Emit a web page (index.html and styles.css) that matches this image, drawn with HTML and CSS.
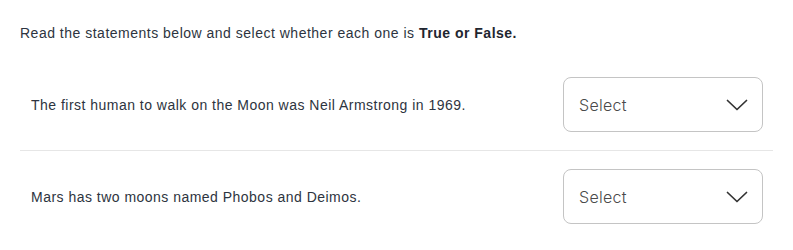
FILE: index.html
```html
<!DOCTYPE html>
<html lang="en">
<head>
<meta charset="utf-8">
<title>True or False</title>
<link rel="stylesheet" href="styles.css">
</head>
<body>
<div class="quiz">
  <p class="intro">Read the statements below and select whether each one is <strong>True or False.</strong></p>
  <div class="row">
    <span class="statement">The first human to walk on the Moon was Neil Armstrong in 1969.</span>
    <div class="select">
      <span class="select-label">Select</span>
      <svg class="chev" width="22" height="12" viewBox="0 0 22 12"><path d="M1.5 1.5 L11 10.5 L20.5 1.5" fill="none" stroke="#333" stroke-width="1.7" stroke-linecap="round" stroke-linejoin="round"/></svg>
    </div>
  </div>
  <div class="row">
    <span class="statement">Mars has two moons named Phobos and Deimos.</span>
    <div class="select">
      <span class="select-label">Select</span>
      <svg class="chev" width="22" height="12" viewBox="0 0 22 12"><path d="M1.5 1.5 L11 10.5 L20.5 1.5" fill="none" stroke="#333" stroke-width="1.7" stroke-linecap="round" stroke-linejoin="round"/></svg>
    </div>
  </div>
</div>
</body>
</html>
```
FILE: styles.css
```css
html, body {
  margin: 0;
  padding: 0;
  background: #ffffff;
}
.quiz {
  padding: 23px 20px 0 20px;
  font-family: "Liberation Sans", Arial, sans-serif;
  color: #2d3440;
}
.intro {
  margin: 0 0 16px 0;
  font-size: 14px;
  line-height: 20px;
  letter-spacing: 0.5px;
}
.intro strong {
  font-weight: bold;
  color: #1f2630;
}
.row {
  display: flex;
  align-items: center;
  justify-content: space-between;
  padding: 18px 10px 18px 11px;
  border-bottom: 1px solid #e6e6e6;
}
.row:last-child {
  border-bottom: none;
}
.statement {
  font-size: 14px;
  letter-spacing: 0.48px;
  line-height: 20px;
}
.select {
  box-sizing: border-box;
  width: 200px;
  height: 55px;
  border: 1px solid #c4c4c4;
  border-radius: 8px;
  display: flex;
  align-items: center;
  justify-content: space-between;
  padding: 0 14px 0 15px;
  background: #fff;
}
.select-label {
  font-family: Inter, "Open Sans", sans-serif;
  font-size: 16px;
  font-weight: 300;
  color: #4a4a4a;
  letter-spacing: 0.3px;
}
.chev {
  display: block;
}
```
